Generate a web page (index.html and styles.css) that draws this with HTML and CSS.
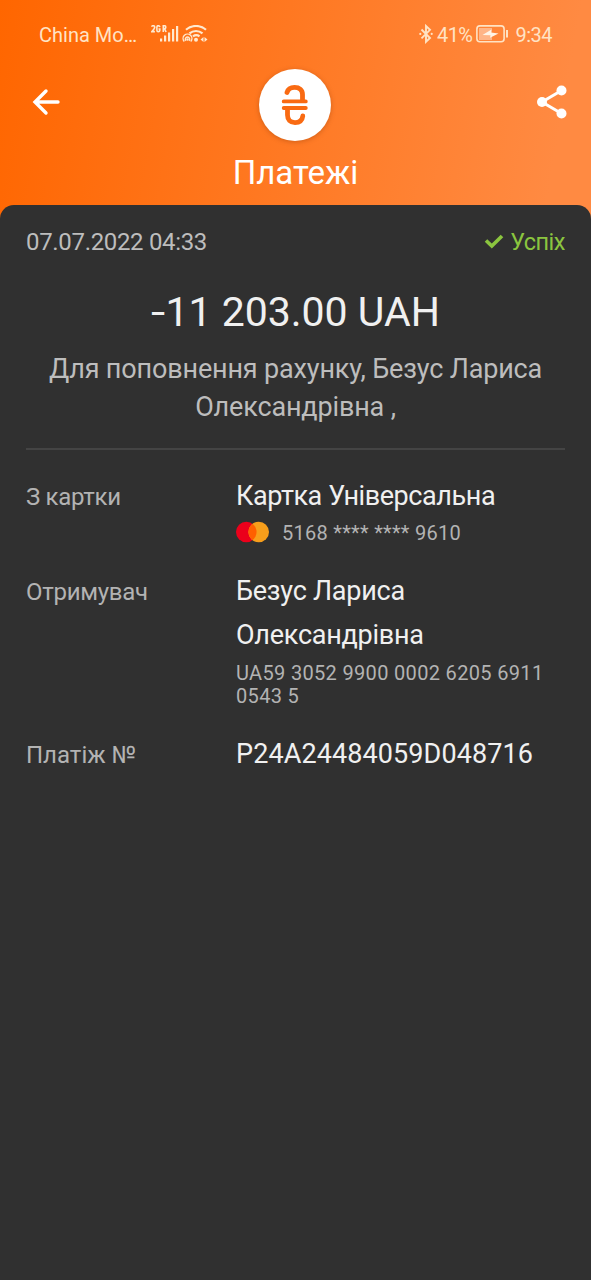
FILE: index.html
```html
<!DOCTYPE html>
<html lang="uk">
<head>
<meta charset="utf-8">
<title>Платежі</title>
<link rel="stylesheet" href="styles.css">
</head>
<body>
<div class="screen">
  <div class="statusbar">
    <span class="carrier">China Mo…</span>
    <svg class="signal" width="58" height="20" viewBox="0 0 58 20">
      <g class="thin">
        <path d="M0.800 1.800Q0.900 0.700 2.300 0.700Q3.700 0.700 3.700 2.200Q3.700 3.400 0.900 6.600H3.900M8.800 2.100Q8.600 0.700 7.300 0.700Q5.900 0.700 5.900 2.200V5.200Q5.900 6.600 7.300 6.600Q8.800 6.600 8.800 5.200V4H7.500M12.300 7V0.700H13.500Q14.800 0.700 14.800 2.200Q14.800 3.600 13.500 3.600H12.300M13.500 3.600L15.100 7"/>
      </g>
      <g class="fill">
        <rect x="9" y="13.500" width="2.200" height="3"/>
        <rect x="13" y="10.500" width="2.200" height="6"/>
        <rect x="17" y="7.500" width="2.200" height="9"/>
        <rect x="21" y="4" width="2.200" height="12.500"/>
        <rect x="25" y="1" width="2.200" height="15.500"/>
        <circle cx="45" cy="14.800" r="2"/>
        <circle cx="36.500" cy="14.500" r="1.200"/>
        <path d="M52.500 12v5l-3-2.500zM53.500 12v5l3-2.500z"/>
      </g>
      <g class="arcs">
        <path d="M35 4.800A15 15 0 0 1 55 4.800M38.500 8.400A10 10 0 0 1 51.500 8.400M42 11.400A5.500 5.500 0 0 1 48.500 11.400"/>
        <path class="fine" d="M33.300 16.500A4.400 4.400 0 1 1 39.700 16.500M35 15.800A2.200 2.200 0 1 1 38 15.800"/>
      </g>
    </svg>
    <div class="status-right">
      <svg class="bluetooth" width="14" height="20" viewBox="0 0 14 20">
        <path d="M2.500 5.500L11 14L7 17.800V2L11 5.800L2.500 14.300"/>
        <circle cx="1.300" cy="9.900" r="1.100"/><circle cx="12.700" cy="9.900" r="1.100"/>
      </svg>
      <span class="percent">41%</span>
      <svg class="battery" width="33" height="18" viewBox="0 0 33 18">
        <rect class="level" x="3" y="3" width="13" height="12"/>
        <rect class="case" x="0.900" y="0.900" width="27.200" height="15.800" rx="3"/>
        <path class="cap" d="M31 5V12.500"/>
        <path class="bolt" d="M6.500 10L15.500 4.500L15 7.500L22.500 8.600L14 12.800L14.500 10.200z"/>
      </svg>
      <span class="clock">9:34</span>
    </div>
  </div>

  <div class="header">
    <svg class="back" width="28" height="28" viewBox="0 0 28 28"><path d="M14 3L3 14L14 25M3.500 14H26"/></svg>
    <div class="badge">
      <svg width="30" height="42" viewBox="0 0 30 42">
        <path class="curve" d="M7 8.500C8 5 10.500 3.400 14.500 3.400C19.500 3.400 22.500 6 22.500 10.500V16.500M7.500 24.500V31C7.500 35.800 10.300 38.600 15 38.600C19.500 38.600 22.300 36.200 22.800 32"/>
        <path class="bars" d="M3.700 17.400H25.800M3.700 24H25.800"/>
      </svg>
    </div>
    <svg class="share" width="30" height="34" viewBox="0 0 30 34">
      <path d="M24.500 5.500L5 17L24.500 28.500"/>
      <circle cx="24.500" cy="5.500" r="5"/><circle cx="5" cy="17" r="5"/><circle cx="24.500" cy="28.500" r="5"/>
    </svg>
  </div>
  <h1 class="title">Платежі</h1>

  <main class="sheet">
    <div class="topline">
      <span class="date">07.07.2022 04:33</span>
      <span class="result">
        <svg width="20" height="16" viewBox="0 0 20 16"><path d="M2 6.500L7.800 12L18 2"/></svg>
        <span class="ok">Успіх</span>
      </span>
    </div>
    <div class="amount"><span class="minus">-</span>11 203.00 UAH</div>
    <p class="purpose">Для поповнення рахунку, Безус Лариса<br>Олександрівна ,</p>

    <dl class="details">
      <div class="row">
        <dt>З картки</dt>
        <dd>
          <div class="value product">Картка Універсальна</div>
          <div class="card">
            <svg width="33" height="22" viewBox="0 0 33 22">
              <circle cx="10.300" cy="11" r="10.300" fill="#eb001b"/>
              <circle cx="22.700" cy="11" r="10.300" fill="#f79e1b"/>
              <path d="M16.500 2.800A10.300 10.300 0 0 1 16.500 19.200A10.300 10.300 0 0 1 16.500 2.800z" fill="#ff5f00"/>
            </svg>
            <span class="pan">5168 **** **** 9610</span>
          </div>
        </dd>
      </div>
      <div class="row">
        <dt>Отримувач</dt>
        <dd>
          <div class="value name">Безус Лариса</div>
          <div class="value name">Олександрівна</div>
          <div class="iban">UA59 3052 9900 0002 6205 6911<br>0543 5</div>
        </dd>
      </div>
      <div class="row">
        <dt class="wide">Платіж №</dt>
        <dd><div class="value number">P24A24484059D048716</div></dd>
      </div>
    </dl>
  </main>
</div>
</body>
</html>
```
FILE: styles.css
```css
* { box-sizing: border-box; }
body { margin: 0; background: #303030; font-family: Roboto, "Noto Sans", sans-serif; }
svg { display: block; flex: none; fill: none; }
.screen { width: 591px; height: 1280px; display: flex; flex-direction: column; overflow: hidden; background: linear-gradient(100deg, #ff6600 0%, #ff8a42 92%) top / 100% 240px no-repeat #303030; }

.statusbar { height: 69px; display: flex; align-items: center; padding: 0 39px; color: #ffe3c4; font-size: 20px; white-space: nowrap; }
.carrier { width: 112px; }
.signal .fill { fill: #ffe9cf; }
.signal .thin, .signal .arcs { stroke: #ffe9cf; stroke-width: 1.6; }
.signal .arcs { stroke-width: 2.2; }
.signal .fine { stroke-width: 1.4; }
.status-right { margin-left: auto; display: flex; align-items: center; }
.bluetooth { stroke: #ffe3c4; stroke-width: 1.9; margin-bottom: 1px; }
.bluetooth circle { fill: #ffe3c4; stroke: none; }
.percent { margin-left: 4px; letter-spacing: -0.6px; }
.clock { letter-spacing: -0.5px; }
.battery { margin: 0 6px 2px 4px; }
.battery .case { stroke: #ffe3c4; stroke-width: 1.6; }
.battery .cap { stroke: #ffe3c4; stroke-width: 2; }
.battery .level { fill: #ffb587; }
.battery .bolt { fill: #fff4e6; }

.header { height: 72px; display: grid; grid-template-columns: 1fr auto 1fr; align-items: start; padding: 0 24px 0 23px; }
.back { margin: 19px 0 0 9px; stroke: #fff; stroke-width: 3.4; stroke-linecap: round; }
.badge { width: 72px; height: 72px; border-radius: 50%; background: #fff; display: flex; align-items: center; justify-content: center; box-shadow: 0 1px 5px rgba(120, 50, 0, .35); }
.badge path { stroke: #f96a12; stroke-linecap: round; }
.badge .curve { stroke-width: 4.8; }
.badge .bars { stroke-width: 3.8; }
.share { margin-top: 16px; justify-self: end; stroke: #fff; stroke-width: 3; }
.share circle { fill: #fff; stroke: none; }
.title { margin: 0; height: 64px; line-height: 63px; font-size: 33px; font-weight: 400; color: #fff; text-align: center; }

.sheet { flex: 1; background: #303030; border-radius: 14px 14px 0 0; padding: 21px 26px 0; }
.topline { display: flex; justify-content: space-between; line-height: 32px; font-size: 24px; color: #bdbdbd; }
.date { letter-spacing: -0.33px; }
.result { display: flex; align-items: center; gap: 6px; color: #8bc53f; }
.result svg { stroke: #8bc53f; stroke-width: 3.6; }
.ok { font-size: 23.5px; letter-spacing: -0.5px; }
.amount { margin-top: 30px; line-height: 48px; font-size: 41px; text-align: center; color: #f0f0f0; }
.minus { display: inline-block; transform: scaleX(1.25); transform-origin: left; margin-right: 3px; }
.purpose { margin: 14px 0 0; padding-bottom: 22px; border-bottom: 2px solid #444; line-height: 38px; font-size: 27px; letter-spacing: -0.16px; text-align: center; color: #bdbdbd; white-space: nowrap; }
.details { margin: 24px 0 0; }
.row { display: flex; margin-bottom: 22px; }
.row + .row { margin-bottom: 24px; }
.row dt { width: 210px; flex: none; padding-top: 1px; line-height: 44.5px; font-size: 24px; letter-spacing: -0.3px; color: #b3b3b3; }
.row dt.wide { letter-spacing: 0; }
.row dd { margin: 0; flex: 1; white-space: nowrap; }
.value { line-height: 44.5px; font-size: 27px; color: #f0f0f0; }
.product { letter-spacing: -0.42px; }
.name { letter-spacing: -0.25px; }
.number { letter-spacing: 0.1px; }
.card { display: flex; align-items: center; gap: 13px; height: 28px; font-size: 20px; letter-spacing: 0.28px; color: #b3b3b3; }
.card svg { margin-bottom: 2px; }
.iban { margin-top: 4px; line-height: 23px; font-size: 20px; letter-spacing: 0.33px; color: #b3b3b3; }
```
